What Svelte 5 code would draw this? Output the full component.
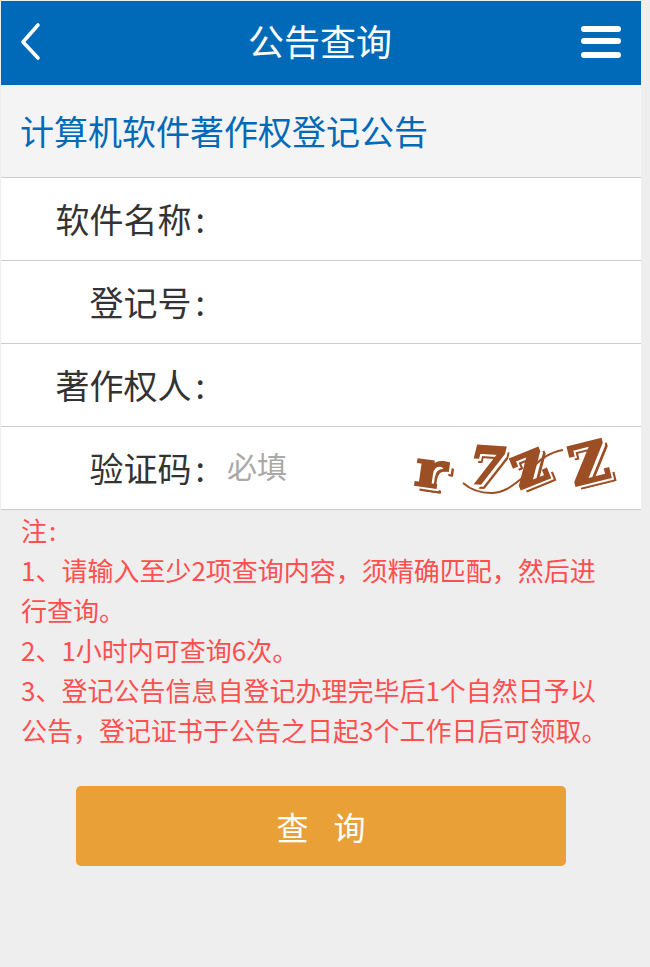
<script>
  const fields = ['软件名称', '登记号', '著作权人'];
</script>

<div class="page">
  <header class="bar">
    <svg class="back" viewBox="0 0 24 40" width="24" height="40" aria-hidden="true">
      <path d="M20 3 L5 20 L20 36" fill="none" stroke="#fff" stroke-width="3.6" stroke-linecap="round" stroke-linejoin="round" />
    </svg>
    <h1>公告查询</h1>
    <div class="menu"><i></i><i></i><i></i></div>
  </header>
  <h2>计算机软件著作权登记公告</h2>
  <form class="form" onsubmit={(e) => e.preventDefault()}>
    {#each fields as f}
      <div class="row">
        <span class="label">{f}<span class="colon">:</span></span>
      </div>
    {/each}
    <div class="row">
      <span class="label">验证码<span class="colon">:</span></span>
      <span class="hint">必填</span>
      <div class="captcha">
        <span class="ch c1">r</span>
        <span class="ch c2">7</span>
        <span class="ch c3">z</span>
        <span class="ch c4">Z</span>
        <svg viewBox="0 0 210 70" width="210" height="70" aria-hidden="true">
          <path d="M52 50 C60 57 70 60 80 60 C92 60 100 54 110 46 C120 38 126 28 134 24 C140 20 146 18 152 17" fill="none" stroke="#9c4f25" stroke-width="2" />
        </svg>
      </div>
    </div>
  </form>
  <div class="notes">
    <p>注<span class="note-colon">:</span></p>
    <p>1、请输入至少2项查询内容&#xFF0C;须精确匹配&#xFF0C;然后进行查询。</p>
    <p>2、1小时内可查询6次。</p>
    <p>3、登记公告信息自登记办理完毕后1个自然日予以公告&#xFF0C;登记证书于公告之日起3个工作日后可领取。</p>
  </div>
  <button class="submit" type="submit"><span>查</span><span>询</span></button>
</div>

<style>
  :global(body) {
    margin: 0;
    background: #eeeeee;
    font-family: "Noto Sans CJK SC", "Noto Sans", sans-serif;
  }
  .page {
    width: 640px;
    margin-left: 1px;
    padding-top: 1px;
    min-height: 966px;
    background: #eeeeee;
  }
  .bar {
    height: 84px;
    background: #0069b8;
    display: flex;
    align-items: center;
    justify-content: space-between;
    padding: 0 20px 0 17px;
    box-sizing: border-box;
    width: 640px;
    position: relative;
  }
  .back { display: block; margin-top: -3px; }
  h1 {
    margin: 0;
    position: absolute;
    left: -2px;
    right: 0;
    top: -3px;
    text-align: center;
    font-size: 36px;
    font-weight: 400;
    color: #fff;
    line-height: 84px;
  }
  .menu {
    display: flex;
    flex-direction: column;
    gap: 6px;
    width: 40px;
    margin-top: -2px;
  }
  .menu i {
    display: block;
    height: 6px;
    border-radius: 3px;
    background: #fff;
  }
  .menu i:last-child { margin-top: 2px; }
  h2 {
    margin: 0;
    height: 93px;
    box-sizing: border-box;
    padding-left: 19px;
    background: #f4f4f4;
    color: #0069b8;
    font-size: 34px;
    font-weight: 400;
    line-height: 92px;
    border-bottom: 1px solid #cccccc;
  }
  .form { background: #fff; }
  .row {
    height: 83px;
    box-sizing: border-box;
    border-bottom: 1px solid #cccccc;
    display: flex;
    align-items: center;
    position: relative;
  }
  .label {
    width: 204px;
    text-align: right;
    font-size: 34px;
    line-height: 48px;
    margin-top: -1px;
    color: #333;
    flex: none;
  }
  .colon { margin-left: 4px; }
  .hint {
    margin-left: 22px;
    font-size: 30px;
    line-height: 44px;
    margin-top: -7px;
    color: #a9a9a9;
  }
  .captcha {
    position: absolute;
    left: 410px;
    top: 6px;
    width: 210px;
    height: 70px;
  }
  .captcha svg { position: absolute; left: 0; top: 0; }
  .ch {
    position: absolute;
    font-family: "DejaVu Serif", serif;
    font-weight: 700;
    color: #9c4f25;
    line-height: 1;
    -webkit-text-stroke: 2px #9c4f25;
    text-shadow: 2px 2px 0 #fff, 3px 3px 0 #fff, 5px 5px 0 #9c4f25, 4px 5px 0 #9c4f25;
  }
  .c1 { left: 7px; top: 12px; font-size: 50px; transform: rotate(8deg) scaleX(1.2); }
  .c2 { left: 58px; top: 7px; font-size: 52px; transform: rotate(4deg) skewX(-10deg); }
  .c3 { left: 99px; top: 0; font-size: 62px; transform: rotate(-22deg); }
  .c4 { left: 158px; top: 3px; font-size: 54px; transform: rotate(-14deg); }
  .notes {
    padding: 0 31px 0 20px;
    color: #ff4f4f;
    font-size: 26px;
    line-height: 40px;
  }
  .notes p { margin: 0; }
  .note-colon { margin-left: 2px; }
  .submit {
    display: flex;
    justify-content: center;
    align-items: center;
    gap: 25px;
    width: 490px;
    height: 80px;
    margin: 36px 0 0 75px;
    border: 0;
    border-radius: 5px;
    background: #e8a037;
    color: #fff;
    font: inherit;
    font-size: 32px;
  }
</style>
